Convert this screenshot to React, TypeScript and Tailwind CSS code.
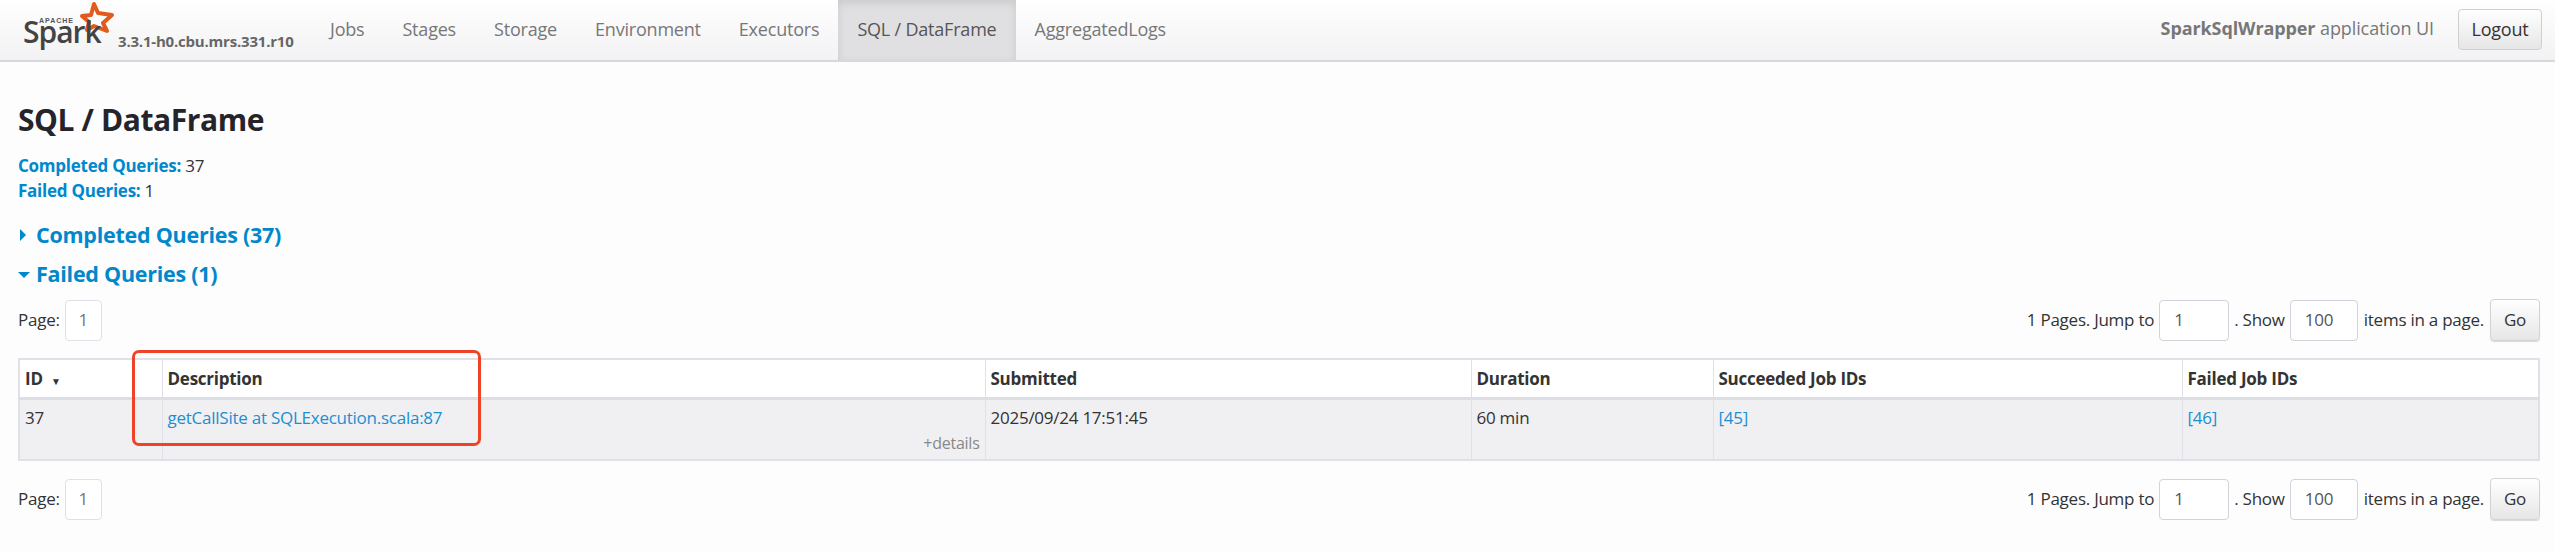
function SparkLogo() {
  return (
    <svg width="116" height="56" viewBox="0 0 116 56" className="shrink-0">
      <path
        d="M92 4 L96 13 L110 15 L101 23 L105 31 L92 26 L85 30 L87 22 L80 16 L89 15 Z"
        fill="#fdfdfd"
        stroke="#e25a1c"
        strokeWidth="4"
        strokeLinejoin="round"
      />
      <text x="37" y="23" fontFamily="'Liberation Sans', sans-serif" fontSize="7" fontWeight="700" letterSpacing="1" fill="#555">
        APACHE
      </text>
      <text x="21" y="43" fontFamily="'Open Sans', sans-serif" fontSize="30" fontWeight="600" letterSpacing="-1" fill="#444">
        Spark
      </text>
    </svg>
  );
}

function Pager() {
  return (
    <div className="flex items-center justify-between">
      <div className="flex items-center">
        <span className="mr-[5px]">Page:</span>
        <span className="flex h-[41px] w-[37px] items-center justify-center rounded-[4px] border border-[#dfe1e8] bg-white text-[#6f7580]">1</span>
      </div>
      <div className="flex items-center">
        <span className="mr-[5px]">1 Pages. Jump to</span>
        <span className="flex h-[41px] w-[70px] items-center rounded-[4px] border border-[#cfd3da] bg-white pl-[14px] text-[#555]">1</span>
        <span className="mx-[5px]">. Show</span>
        <span className="flex h-[41px] w-[68px] items-center rounded-[4px] border border-[#cfd3da] bg-white pl-[14px] text-[#555]">100</span>
        <span className="mx-[6px]">items in a page.</span>
        <button className="h-[42px] w-[50px] rounded-[4px] border border-[#d3d3d6] bg-gradient-to-b from-white to-[#e6e6e6] text-[#333] shadow-[0_1px_1px_rgba(0,0,0,0.15)]">Go</button>
      </div>
    </div>
  );
}

const navItems = ["Jobs", "Stages", "Storage", "Environment", "Executors", "SQL / DataFrame", "AggregatedLogs"];

export default function App() {
  return (
    <div className="relative h-[552px] w-[2555px] overflow-hidden bg-[#fdfdfe] font-['Open_Sans',sans-serif] text-[17px] tracking-[-0.25px] text-[#333]">
      <div className="flex h-[62px] items-start border-b-2 border-[#d8d8d8] bg-gradient-to-b from-white to-[#f2f2f4]">
        <div className="flex h-[60px] w-[311px] pl-[2px]">
          <SparkLogo />
          <span className="mt-[30px] text-[15px] font-bold tracking-[-0.2px] whitespace-nowrap text-[#666]">3.3.1-h0.cbu.mrs.331.r10</span>
        </div>
        <nav className="flex">
          {navItems.map((item) => (
            <a
              key={item}
              className={
                item === "SQL / DataFrame"
                  ? "flex h-[60px] items-center bg-[#e0e0e2] px-[19px] pb-[1px] text-[18px] tracking-[-0.2px] text-[#555] shadow-[inset_0_3px_8px_rgba(0,0,0,0.1)]"
                  : "flex h-[60px] items-center px-[19px] pb-[1px] text-[18px] tracking-[-0.2px] text-[#777]"
              }
            >
              {item}
            </a>
          ))}
        </nav>
        <div className="ml-auto flex items-start pr-[13px]">
          <p className="mt-[15px] mr-[24px] text-[18px] tracking-[-0.1px] text-[#777]">
            <strong className="font-bold">SparkSqlWrapper</strong> application UI
          </p>
          <button className="mt-[9px] h-[41px] w-[84px] rounded-[4px] border border-[#cfcfd2] bg-gradient-to-b from-white to-[#e6e6e6] text-[18px] text-[#333]">Logout</button>
        </div>
      </div>

      <div className="px-[18px] pr-[15px]">
        <h3 className="mt-[38px] text-[30px] leading-[40px] font-bold tracking-[-0.4px] text-[#24242a]">SQL / DataFrame</h3>
        <ul className="mt-[13px]">
          <li className="h-[25px] leading-[25px]"><strong className="font-bold text-[#0088cc]">Completed Queries:</strong> 37</li>
          <li className="h-[25px] leading-[25px]"><strong className="font-bold text-[#0088cc]">Failed Queries:</strong> 1</li>
        </ul>
        <h4 className="mt-[17px] flex h-[30px] items-center text-[21.5px] font-bold text-[#0088cc]">
          <span className="mr-[10px] ml-[2px] h-0 w-0 border-y-[6px] border-l-[6px] border-y-transparent border-l-[#0088cc]"></span>
          Completed Queries (37)
        </h4>
        <h4 className="mt-[9px] flex h-[30px] items-center text-[21.5px] font-bold text-[#0088cc]">
          <span className="mr-[6px] mt-[2px] h-0 w-0 border-x-[6px] border-t-[6px] border-x-transparent border-t-[#0088cc]"></span>
          Failed Queries (1)
        </h4>
        <div className="mt-[10px]">
          <Pager />
        </div>
        <table className="mt-[17px] w-[2522px] table-fixed border-collapse border-2 border-[#e0e1e8] bg-white">
          <thead>
            <tr className="h-[39px] border-b-[3px] border-[#dcdee5] text-left">
              <th className="w-[143px] border border-[#e0e1e8] px-[5px] font-bold">ID <span className="ml-[4px] text-[10px]">▼</span></th>
              <th className="w-[823px] border border-[#e0e1e8] px-[5px] font-bold">Description</th>
              <th className="w-[486px] border border-[#e0e1e8] px-[5px] font-bold">Submitted</th>
              <th className="w-[242px] border border-[#e0e1e8] px-[5px] font-bold">Duration</th>
              <th className="w-[469px] border border-[#e0e1e8] px-[5px] font-bold">Succeeded Job IDs</th>
              <th className="border border-[#e0e1e8] px-[5px] font-bold">Failed Job IDs</th>
            </tr>
          </thead>
          <tbody>
            <tr className="h-[62px] bg-[#f0f0f2] align-top">
              <td className="border border-[#e0e1e8] px-[5px] pt-[6px] leading-[24px]">37</td>
              <td className="border border-[#e0e1e8] px-[5px] pt-[6px] leading-[24px]">
                <a className="text-[#1a8fd1]">getCallSite at SQLExecution.scala:87</a>
                <div className="mt-[3px] text-right text-[16px] leading-[20px] text-[#888]">+details</div>
              </td>
              <td className="border border-[#e0e1e8] px-[5px] pt-[6px] leading-[24px]">2025/09/24 17:51:45</td>
              <td className="border border-[#e0e1e8] px-[5px] pt-[6px] leading-[24px]">60 min</td>
              <td className="border border-[#e0e1e8] px-[5px] pt-[6px] leading-[24px]"><a className="text-[#1a8fd1]">[45]</a></td>
              <td className="border border-[#e0e1e8] px-[5px] pt-[6px] leading-[24px]"><a className="text-[#1a8fd1]">[46]</a></td>
            </tr>
          </tbody>
        </table>
        <div className="mt-[17px]">
          <Pager />
        </div>
      </div>

      {/* annotation box drawn over the table */}
      <div className="absolute top-[350px] left-[132px] h-[96px] w-[349px] rounded-[7px] border-[3px] border-[#ee4326]"></div>
    </div>
  );
}
